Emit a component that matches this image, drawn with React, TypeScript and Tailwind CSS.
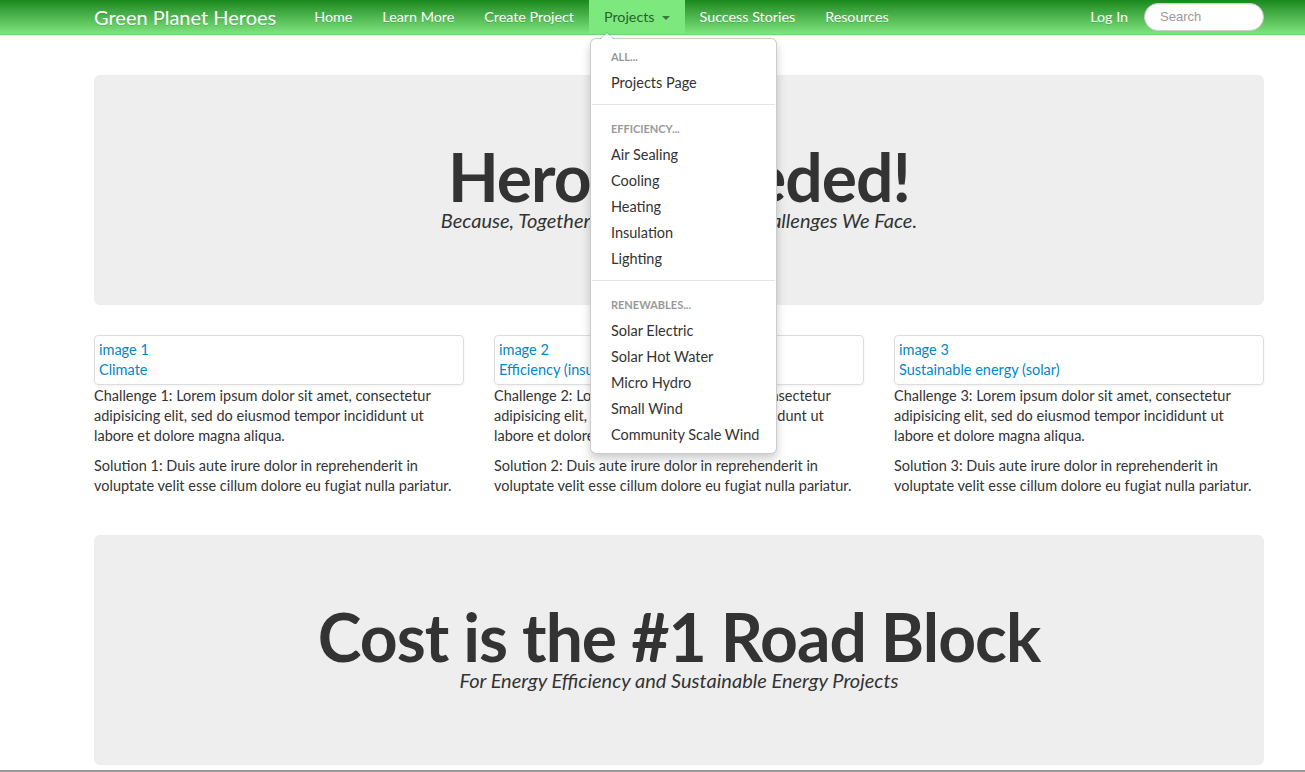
const NAV = ["Home", "Learn More", "Create Project"];

const DROPDOWN: { header: string; items: string[] }[] = [
  { header: "All...", items: ["Projects Page"] },
  { header: "Efficiency...", items: ["Air Sealing", "Cooling", "Heating", "Insulation", "Lighting"] },
  {
    header: "Renewables...",
    items: ["Solar Electric", "Solar Hot Water", "Micro Hydro", "Small Wind", "Community Scale Wind"],
  },
];

const CARDS = [
  { n: 1, label: "Climate" },
  { n: 2, label: "Efficiency (insulation)" },
  { n: 3, label: "Sustainable energy (solar)" },
];

function ProjectsMenu() {
  return (
    <div className="absolute left-[1px] top-[38px] w-[187px] rounded-[6px] border border-black/20 bg-white py-[5px] shadow-[0_5px_10px_rgba(0,0,0,0.2)] z-10">
      {/* caret */}
      <div className="absolute -top-[7px] left-[9px] h-0 w-0 border-x-[7px] border-b-[7px] border-x-transparent border-b-black/20" />
      <div className="absolute -top-[6px] left-[10px] h-0 w-0 border-x-[6px] border-b-[6px] border-x-transparent border-b-white" />
      {DROPDOWN.map((group, i) => (
        <div key={group.header}>
          {i > 0 && <div className="mx-[1px] mb-[11px] mt-[8px] h-px bg-[#e5e5e5]" />}
          <div className="px-5 py-[3px] text-[11px] font-bold uppercase leading-5 text-[#999]">
            {group.header}
          </div>
          {group.items.map((item) => (
            <div key={item} className="whitespace-nowrap px-5 py-[3px] text-[14.5px] leading-5 text-[#333]">
              {item}
            </div>
          ))}
        </div>
      ))}
    </div>
  );
}

function Hero({ title, sub }: { title: string; sub: string }) {
  return (
    <div className="h-[230px] rounded-[6px] bg-[#eeeeee] pt-[70px] text-center">
      <h1 className="text-[66px] font-bold leading-[64px] tracking-[-1px] text-[#333]">{title}</h1>
      <p className="mt-[-4px] text-[20px] italic leading-[30px] text-[#333]">{sub}</p>
    </div>
  );
}

export default function App() {
  return (
    <div className="relative h-[772px] overflow-hidden bg-white font-['Lato',sans-serif] text-[14.5px] leading-5 text-[#333]">
      {/* Navbar */}
      <div className="h-[35px] border-b border-[#6fd86f] bg-gradient-to-b from-[#17891b] to-[#7fe67f]">
        <div className="ml-[94px] flex h-full w-[1170px] items-center text-[14.3px]">
          <span className="mr-[23px] text-[20px] text-white [text-shadow:0_1px_0_rgba(0,0,0,0.15)]">
            Green Planet Heroes
          </span>
          {NAV.map((n) => (
            <span key={n} className="px-[15px] text-white [text-shadow:0_1px_0_rgba(0,0,0,0.15)]">
              {n}
            </span>
          ))}
          <div className="relative h-full">
            <span className="flex h-full items-center bg-[#7de87d] px-[15px] text-[#2c5f2c]">
              Projects
              <span className="ml-[7px] mt-[1px] h-0 w-0 border-x-[4px] border-t-[4px] border-x-transparent border-t-[#3a7a3a]" />
            </span>
            <ProjectsMenu />
          </div>
          {["Success Stories", "Resources"].map((n) => (
            <span key={n} className="px-[15px] text-white [text-shadow:0_1px_0_rgba(0,0,0,0.15)]">
              {n}
            </span>
          ))}
          <div className="ml-auto flex items-center">
            <span className="mr-[16px] text-white [text-shadow:0_1px_0_rgba(0,0,0,0.15)]">Log In</span>
            <div className="flex h-[28px] w-[120px] items-center rounded-[14px] border border-[#ccc] bg-white px-[15px] font-['Liberation_Sans',sans-serif] text-[13px] text-[#999] shadow-[inset_0_1px_1px_rgba(0,0,0,0.075)]">
              Search
            </div>
          </div>
        </div>
      </div>

      <main className="ml-[94px] w-[1170px] pt-[40px]">
        <Hero title="Heroes Needed!" sub="Because, Together, We Can Meet the Challenges We Face." />

        <div className="mt-[30px] grid grid-cols-3 gap-[30px]">
          {CARDS.map((c) => (
            <div key={c.n}>
              <div className="rounded-[4px] border border-[#ddd] p-[4px] text-[#0088cc] shadow-[0_1px_3px_rgba(0,0,0,0.055)]">
                <div>image {c.n}</div>
                <div>{c.label}</div>
              </div>
              <p className="mt-[1px]">
                Challenge {c.n}: Lorem ipsum dolor sit amet, consectetur adipisicing elit, sed do eiusmod tempor
                incididunt ut labore et dolore magna aliqua.
              </p>
              <p className="mt-[10px]">
                Solution {c.n}: Duis aute irure dolor in reprehenderit in voluptate velit esse cillum dolore eu fugiat
                nulla pariatur.
              </p>
            </div>
          ))}
        </div>

        <div className="mt-[39px]">
          <Hero title="Cost is the #1 Road Block" sub="For Energy Efficiency and Sustainable Energy Projects" />
        </div>
      </main>

      <div className="absolute bottom-0 left-0 h-[2px] w-full bg-[#999]" />
    </div>
  );
}
